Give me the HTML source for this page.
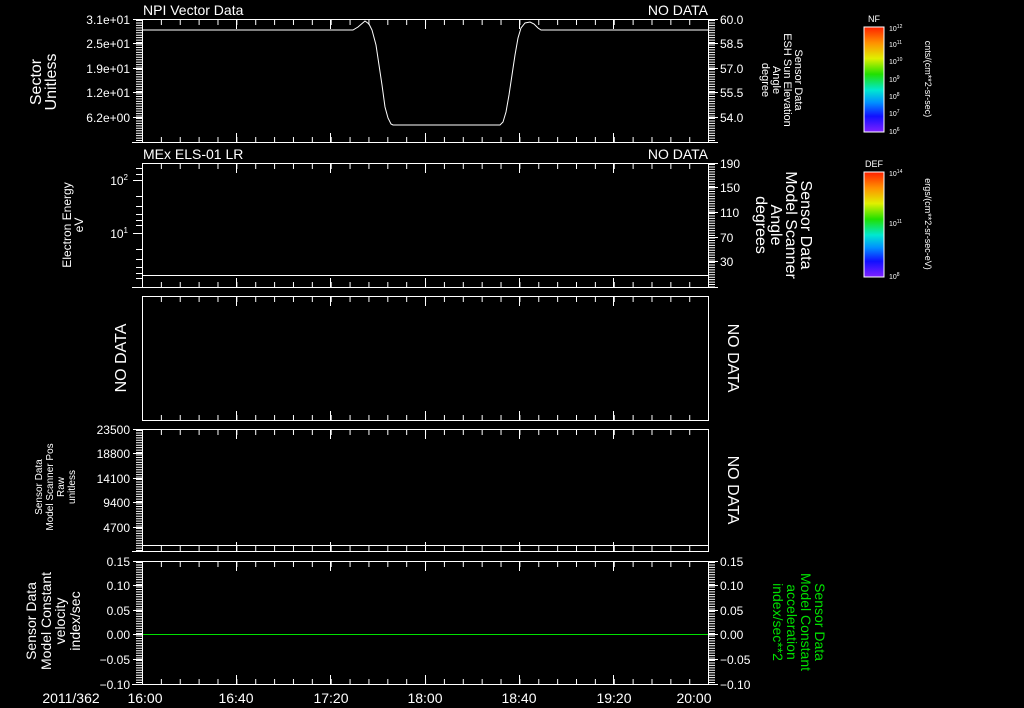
<!DOCTYPE html>
<html><head><style>
html,body{margin:0;padding:0;background:#000;}
svg{display:block;}
text{font-family:"Liberation Sans",sans-serif;fill:#fff;}
</style></head><body>
<svg width="1024" height="708" viewBox="0 0 1024 708" xmlns="http://www.w3.org/2000/svg">
<defs>
<linearGradient id="rb" x1="0" y1="0" x2="0" y2="1">
<stop offset="0" stop-color="#ff2000"/><stop offset="0.15" stop-color="#ff9000"/><stop offset="0.3" stop-color="#e0f000"/><stop offset="0.45" stop-color="#20e000"/><stop offset="0.6" stop-color="#00e8d0"/><stop offset="0.72" stop-color="#0090ff"/><stop offset="0.85" stop-color="#1010ff"/><stop offset="1" stop-color="#8020ff"/>
</linearGradient>
</defs>
<g fill="none" stroke="#fff" stroke-width="1">
<rect x="142.5" y="19.5" width="566" height="123"/>
<rect x="142.5" y="163.5" width="566" height="124"/>
<rect x="142.5" y="296.5" width="566" height="124"/>
<rect x="142.5" y="429.5" width="566" height="122"/>
<rect x="142.5" y="561.5" width="566" height="123"/>
<line x1="132" y1="142.5" x2="142" y2="142.5"/><line x1="132" y1="287.5" x2="142" y2="287.5"/>
<line x1="132" y1="551.5" x2="142" y2="551.5"/><line x1="132" y1="684.5" x2="142" y2="684.5"/>
<line x1="709" y1="142.5" x2="718" y2="142.5"/><line x1="709" y1="287.5" x2="718" y2="287.5"/>
<polyline points="143,30 353,30 358,27 365,21 369,24 372,30 376,45 379,65 382,85 385,107 388,118 391,124 393,125 500,125 503,122 506,112 509,95 512,75 515,55 518,38 521,28 525,23 530,22 534,24 538,28 541,30 708,30"/>
<line x1="143" y1="275.5" x2="708" y2="275.5"/>
<line x1="143" y1="545.5" x2="708" y2="545.5"/>
</g>
<line x1="143" y1="634.5" x2="708" y2="634.5" stroke="#00e000" stroke-width="1"/>
<!-- minor ticks top/bottom -->
<g stroke="#fff" stroke-width="5" stroke-dasharray="1 17.87">
<line x1="142" y1="22.5" x2="709" y2="22.5"/><line x1="142" y1="139.5" x2="709" y2="139.5"/>
<line x1="142" y1="166.5" x2="709" y2="166.5"/><line x1="142" y1="284.5" x2="709" y2="284.5"/>
<line x1="142" y1="299.5" x2="709" y2="299.5"/><line x1="142" y1="417.5" x2="709" y2="417.5"/>
<line x1="142" y1="432.5" x2="709" y2="432.5"/><line x1="142" y1="548.5" x2="709" y2="548.5"/>
<line x1="142" y1="564.5" x2="709" y2="564.5"/><line x1="142" y1="681.5" x2="709" y2="681.5"/>
</g>
<g stroke="#fff">
<path d="M236.5 20v9M330.5 20v9M425.5 20v9M519.5 20v9M613.5 20v9M236.5 142v-9M330.5 142v-9M425.5 142v-9M519.5 142v-9M613.5 142v-9
M236.5 164v9M330.5 164v9M425.5 164v9M519.5 164v9M613.5 164v9M236.5 287v-9M330.5 287v-9M425.5 287v-9M519.5 287v-9M613.5 287v-9
M236.5 297v9M330.5 297v9M425.5 297v9M519.5 297v9M613.5 297v9M236.5 420v-9M330.5 420v-9M425.5 420v-9M519.5 420v-9M613.5 420v-9
M236.5 430v9M330.5 430v9M425.5 430v9M519.5 430v9M613.5 430v9M236.5 551v-9M330.5 551v-9M425.5 551v-9M519.5 551v-9M613.5 551v-9
M236.5 562v9M330.5 562v9M425.5 562v9M519.5 562v9M613.5 562v9M236.5 684v-9M330.5 684v-9M425.5 684v-9M519.5 684v-9M613.5 684v-9"/>
<path d="M133 19.5h9M133 43.5h9M133 68.5h9M133 92.5h9M133 117.5h9M709 19.5h9M709 43.5h9M709 68.5h9M709 92.5h9M709 117.5h9
M133 180.5h9M133 233.5h9M709 163.5h9M709 187.5h9M709 212.5h9M709 237.5h9M709 261.5h9
M133 429.5h9M133 453.5h9M133 478.5h9M133 502.5h9M133 527.5h9
M133 561.5h9M133 585.5h9M133 610.5h9M133 634.5h9M133 659.5h9M133 684.5h9M709 561.5h9M709 585.5h9M709 610.5h9M709 634.5h9M709 659.5h9M709 684.5h9"/>
<path d="M136 196.5h6M136 206.5h6M136 214.5h6M136 220.5h6M136 225.5h6M136 249.5h6M136 259.5h6M136 267.5h6M136 273.5h6M136 278.5h6M136 168.5h6M136 174.5h6"/>
</g>
<g stroke="#fff" stroke-width="6" stroke-dasharray="1 1.45">
<line x1="139" y1="20" x2="139" y2="142"/><line x1="712" y1="20" x2="712" y2="142"/>
<line x1="712" y1="164" x2="712" y2="287"/>
<line x1="139" y1="430" x2="139" y2="551"/>
<line x1="139" y1="562" x2="139" y2="684"/><line x1="712" y1="562" x2="712" y2="684"/>
</g>
<!-- titles -->
<text x="143" y="15" font-size="14">NPI Vector Data</text>
<text x="708" y="15" font-size="14" text-anchor="end">NO DATA</text>
<text x="143" y="159" font-size="14">MEx ELS-01 LR</text>
<text x="708" y="159" font-size="14" text-anchor="end">NO DATA</text>
<!-- y labels -->
<g font-size="12" text-anchor="end">
<text x="130" y="24">3.1e+01</text><text x="130" y="48">2.5e+01</text><text x="130" y="73">1.9e+01</text><text x="130" y="97">1.2e+01</text><text x="130" y="122">6.2e+00</text>
<text x="128" y="185">10<tspan font-size="8" dy="-5">2</tspan></text><text x="128" y="238">10<tspan font-size="8" dy="-5">1</tspan></text>
<text x="130" y="434">23500</text><text x="130" y="458">18800</text><text x="130" y="483">14100</text><text x="130" y="507">9400</text><text x="130" y="532">4700</text>
<text x="130" y="566">0.15</text><text x="130" y="590">0.10</text><text x="130" y="615">0.05</text><text x="130" y="639">0.00</text><text x="130" y="664">−0.05</text><text x="130" y="689">−0.10</text>
</g>
<g font-size="12">
<text x="720" y="24">60.0</text><text x="720" y="48">58.5</text><text x="720" y="73">57.0</text><text x="720" y="97">55.5</text><text x="720" y="122">54.0</text>
<text x="720" y="168">190</text><text x="720" y="192">150</text><text x="720" y="217">110</text><text x="720" y="242">70</text><text x="720" y="266">30</text>
<text x="720" y="566">0.15</text><text x="720" y="590">0.10</text><text x="720" y="615">0.05</text><text x="720" y="639">0.00</text><text x="720" y="664">−0.05</text><text x="720" y="689">−0.10</text>
</g>
<!-- x labels -->
<g font-size="14" text-anchor="middle">
<text x="71" y="703">2011/362</text>
<text x="145" y="703">16:00</text><text x="236" y="703">16:40</text><text x="331" y="703">17:20</text><text x="425" y="703">18:00</text><text x="519" y="703">18:40</text><text x="614" y="703">19:20</text><text x="694" y="703">20:00</text>
</g>
<!-- rotated left labels -->
<g text-anchor="middle">
<text transform="translate(41,82) rotate(-90)" font-size="16">Sector</text>
<text transform="translate(56,82) rotate(-90)" font-size="16">Unitless</text>
<text transform="translate(71,225) rotate(-90)" font-size="12">Electron Energy</text>
<text transform="translate(83,225) rotate(-90)" font-size="12">eV</text>
<text transform="translate(126,358) rotate(-90)" font-size="16">NO DATA</text>
<text transform="translate(42,487) rotate(-90)" font-size="10">Sensor Data</text>
<text transform="translate(53,487) rotate(-90)" font-size="10">Model Scanner Pos</text>
<text transform="translate(64,487) rotate(-90)" font-size="10">Raw</text>
<text transform="translate(75,487) rotate(-90)" font-size="10">unitless</text>
<text transform="translate(36,621) rotate(-90)" font-size="14">Sensor Data</text>
<text transform="translate(51,621) rotate(-90)" font-size="14">Model Constant</text>
<text transform="translate(65,621) rotate(-90)" font-size="14">velocity</text>
<text transform="translate(80,621) rotate(-90)" font-size="14">index/sec</text>
<text transform="translate(795,80) rotate(90)" font-size="11">Sensor Data</text>
<text transform="translate(784,80) rotate(90)" font-size="11">ESH Sun Elevation</text>
<text transform="translate(773,80) rotate(90)" font-size="11">Angle</text>
<text transform="translate(762,80) rotate(90)" font-size="11">degree</text>
<text transform="translate(801,225) rotate(90)" font-size="16">Sensor Data</text>
<text transform="translate(786,225) rotate(90)" font-size="16">Model Scanner</text>
<text transform="translate(771,225) rotate(90)" font-size="16">Angle</text>
<text transform="translate(756,225) rotate(90)" font-size="16">degrees</text>
<text transform="translate(728,358) rotate(90)" font-size="16">NO DATA</text>
<text transform="translate(728,490) rotate(90)" font-size="16">NO DATA</text>
<text transform="translate(815,622) rotate(90)" font-size="14" style="fill:#00e000">Sensor Data</text>
<text transform="translate(801,622) rotate(90)" font-size="14" style="fill:#00e000">Model Constant</text>
<text transform="translate(787,622) rotate(90)" font-size="14" style="fill:#00e000">acceleration</text>
<text transform="translate(773,622) rotate(90)" font-size="14" style="fill:#00e000">index/sec**2</text>
<text transform="translate(925,79) rotate(90)" font-size="9">cnts/(cm**2-sr-sec)</text>
<text transform="translate(925,224) rotate(90)" font-size="9">ergs/(cm**2-sr-sec-eV)</text>
</g>
<!-- colorbars -->
<rect x="864" y="27" width="20" height="105" fill="url(#rb)" stroke="#fff" stroke-width="1"/>
<rect x="864" y="172" width="20" height="105" fill="url(#rb)" stroke="#fff" stroke-width="1"/>
<text x="874" y="22" font-size="9" text-anchor="middle">NF</text>
<text x="874" y="167" font-size="9" text-anchor="middle">DEF</text>
<g font-size="7">
<text x="889" y="31">10<tspan font-size="5" dy="-3">12</tspan></text>
<text x="889" y="47">10<tspan font-size="5" dy="-3">11</tspan></text>
<text x="889" y="64">10<tspan font-size="5" dy="-3">10</tspan></text>
<text x="889" y="82">10<tspan font-size="5" dy="-3">9</tspan></text>
<text x="889" y="99">10<tspan font-size="5" dy="-3">8</tspan></text>
<text x="889" y="116">10<tspan font-size="5" dy="-3">7</tspan></text>
<text x="889" y="134">10<tspan font-size="5" dy="-3">6</tspan></text>
<text x="889" y="176">10<tspan font-size="5" dy="-3">14</tspan></text>
<text x="889" y="226">10<tspan font-size="5" dy="-3">11</tspan></text>
<text x="889" y="279">10<tspan font-size="5" dy="-3">8</tspan></text>
</g>
</svg>
</body></html>
